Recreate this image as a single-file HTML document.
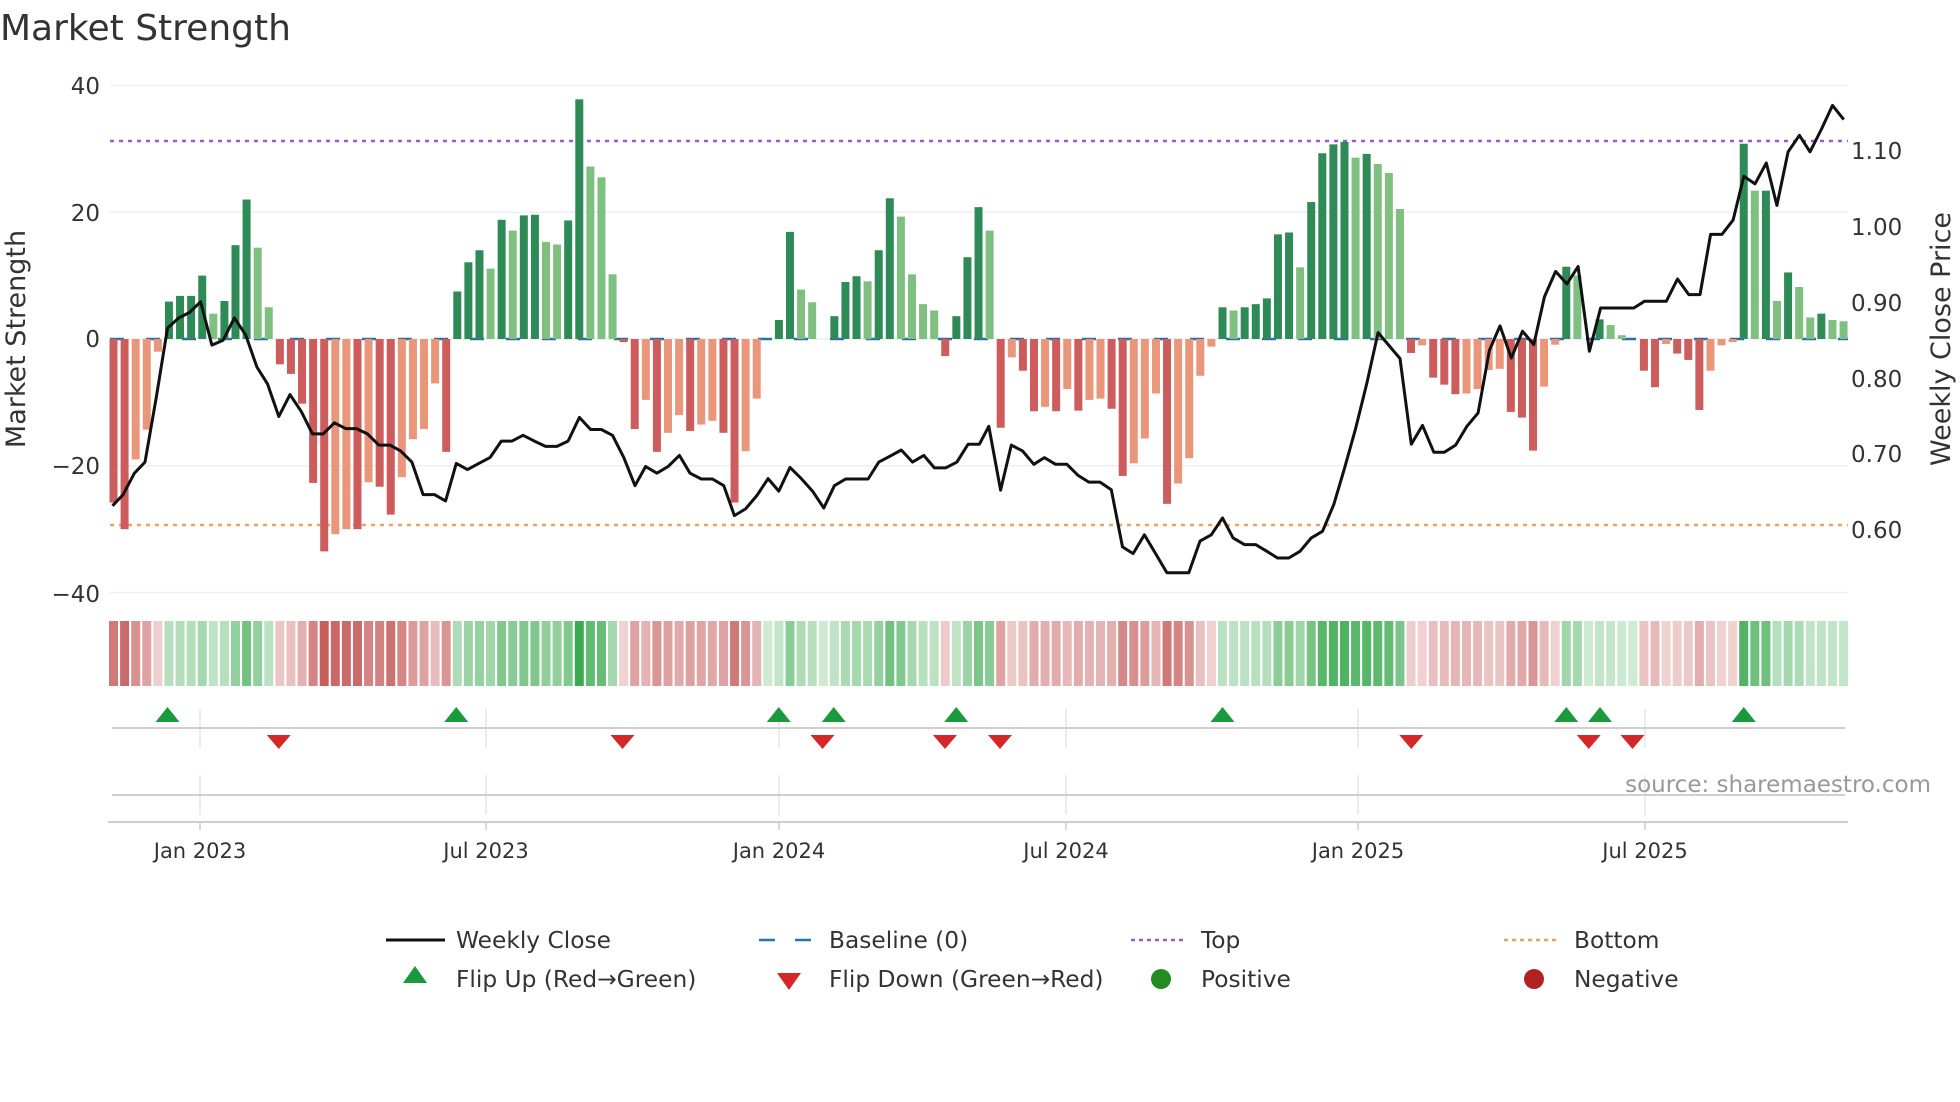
<!DOCTYPE html>
<html><head><meta charset="utf-8"><style>
html,body{margin:0;padding:0;background:#fff;}
svg{display:block;font-family:"DejaVu Sans","Liberation Sans",sans-serif;}
</style></head><body>
<svg id="c" width="1960" height="1102" viewBox="0 0 1960 1102" xmlns="http://www.w3.org/2000/svg">
<text x="0" y="40" font-size="36" fill="#333">Market Strength</text>
<g id="grid"></g>
<g id="bars"></g>
<g id="heat"></g>
<polyline id="pline" fill="none" stroke="#111" stroke-width="3" stroke-linejoin="round"/>
<g font-size="23" fill="#333">
<text x="100" y="94" text-anchor="end">40</text>
<text x="100" y="221" text-anchor="end">20</text>
<text x="100" y="347" text-anchor="end">0</text>
<text x="100" y="474" text-anchor="end">−20</text>
<text x="100" y="602" text-anchor="end">−40</text>
<text x="1851" y="159">1.10</text>
<text x="1851" y="235">1.00</text>
<text x="1851" y="311">0.90</text>
<text x="1851" y="387">0.80</text>
<text x="1851" y="462">0.70</text>
<text x="1851" y="538">0.60</text>
<text transform="translate(25,339) rotate(-90)" text-anchor="middle" font-size="27">Market Strength</text>
<text transform="translate(1950,339) rotate(-90)" text-anchor="middle" font-size="27">Weekly Close Price</text>
</g>
<g id="marks"></g>
<text x="1931" y="792" font-size="23" fill="#999" text-anchor="end">source: sharemaestro.com</text>
<g font-size="21" fill="#333" text-anchor="middle">
<text x="200" y="858">Jan 2023</text>
<text x="486" y="858">Jul 2023</text>
<text x="779" y="858">Jan 2024</text>
<text x="1066" y="858">Jul 2024</text>
<text x="1358" y="858">Jan 2025</text>
<text x="1645" y="858">Jul 2025</text>
</g>
<g font-size="23.3" fill="#333">
<line x1="386" y1="940" x2="445" y2="940" stroke="#111" stroke-width="3"/>
<text x="456" y="948">Weekly Close</text>
<line x1="759" y1="940" x2="812" y2="940" stroke="#1f77b4" stroke-width="2.5" stroke-dasharray="16,20"/>
<text x="829" y="948">Baseline (0)</text>
<line x1="1131" y1="940" x2="1185" y2="940" stroke="#9b59d0" stroke-width="2.5" stroke-dasharray="4,4"/>
<text x="1201" y="948">Top</text>
<line x1="1504" y1="940" x2="1557" y2="940" stroke="#f0a060" stroke-width="2.5" stroke-dasharray="4,4"/>
<text x="1574" y="948">Bottom</text>
<polygon points="415,966 427,983 403,983" fill="#1a9a3c"/>
<text x="456" y="987">Flip Up (Red→Green)</text>
<polygon points="777,973 801,973 789,990" fill="#d62728"/>
<text x="829" y="987">Flip Down (Green→Red)</text>
<circle cx="1161" cy="979" r="10" fill="#228b22"/>
<text x="1201" y="987">Positive</text>
<circle cx="1534" cy="979" r="10" fill="#b22222"/>
<text x="1574" y="987">Negative</text>
</g>
</svg>
<script>
(function(){
var NS="http://www.w3.org/2000/svg";
function el(p,t,a){var e=document.createElementNS(NS,t);for(var k in a)e.setAttribute(k,a[k]);p.appendChild(e);return e;}
var v=[-25.8,-30,-19,-14.3,-2,5.9,6.8,6.8,10,4,6,14.8,22,14.4,5,-4,-5.5,-10.2,-22.7,-33.5,-30.8,-30,-30,-22.6,-23.3,-27.7,-21.8,-15.8,-14.2,-7,-17.8,7.5,12.1,14,11.1,18.8,17.1,19.5,19.6,15.3,14.9,18.7,37.8,27.2,25.5,10.2,-0.5,-14.2,-9.6,-17.8,-14.8,-12,-14.5,-13.5,-12.9,-14.8,-25.8,-17.7,-9.4,0,3,16.9,7.8,5.8,0,3.6,9,9.9,9.1,14,22.2,19.3,10.2,5.5,4.5,-2.7,3.6,12.9,20.8,17.1,-14,-2.9,-5,-11.4,-10.7,-11.4,-7.9,-11.3,-9.6,-9.4,-11,-21.6,-19.6,-15.7,-8.6,-26,-22.8,-18.8,-5.8,-1.2,5,4.5,5,5.5,6.4,16.5,16.8,11.3,21.6,29.3,30.7,31.1,28.6,29.2,27.6,26.2,20.5,-2.2,-1,-6.1,-7.2,-8.7,-8.6,-7.9,-4.9,-4.7,-11.5,-12.4,-17.6,-7.5,-0.9,11.4,10,0,3.1,2.2,0.6,0,-5,-7.6,-0.8,-2.3,-3.3,-11.2,-5,-1,-0.5,30.8,23.4,23.4,6,10.5,8.2,3.4,4,3,2.8];
var g=document.getElementById('grid'),b=document.getElementById('bars'),hg=document.getElementById('heat'),m=document.getElementById('marks');
var y0=339,u=6.34,x0=113.5,st=11.09;
[40,20,0,-20,-40].forEach(function(t){el(g,'line',{x1:110,x2:1848,y1:y0-t*u,y2:y0-t*u,stroke:'#eceff4','stroke-width':1.5});});
el(g,'line',{x1:110,x2:1848,y1:141,y2:141,stroke:'#9b59d0','stroke-width':2.5,'stroke-dasharray':'4,5'});
el(g,'line',{x1:110,x2:1848,y1:525,y2:525,stroke:'#f0a060','stroke-width':2.5,'stroke-dasharray':'4,5'});
el(g,'line',{x1:110,x2:1848,y1:y0,y2:y0,stroke:'#2a6fa6','stroke-width':2.5,'stroke-dasharray':'14,22'});
for(var i=0;i<v.length;i++){var x=x0+i*st,val=v[i],p=i?v[i-1]:0;
 if(val!==0){var pos=val>0,dark=(p*val<=0)||Math.abs(val)>=Math.abs(p);
  var col=pos?(dark?'#2e8b57':'#7fbf7f'):(dark?'#cd5c5c':'#e9967a');
  var ty=pos?y0-val*u:y0,hh=Math.abs(val)*u;
  el(b,'rect',{x:x-4,y:ty,width:8,height:hh,fill:col});}
 var a=0.25+0.75*Math.min(Math.abs(val)/36,1);
 var hc=val>=0?'rgba(60,170,80,'+a+')':'rgba(195,85,85,'+a+')';
 el(hg,'rect',{x:x-4.5,y:621,width:9,height:65,fill:hc});
}
var L=[[180,1133],[197,1108],[215,1060],[232,1035],[250,890],[268,735],[286,712],[303,700],[321,676],[339,773],[357,762],[375,712],[393,750],[411,822],[428,860],[446,933],[464,884],[482,922],[500,972],[517,972],[535,947],[553,960],[570,960],[588,972],[606,997],[624,997],[641,1010],[659,1035],[677,1108],[695,1108],[713,1122],[730,1038],[748,1052],[766,1038],[784,1025],[802,988],[819,988],[837,975],[855,988],[873,1000],[891,1000],[909,988],[927,935],[945,962],[962,962],[980,975],[998,1025],[1016,1088],[1033,1045],[1051,1060],[1069,1045],[1087,1020],[1104,1060],[1122,1073],[1140,1073],[1158,1088],[1175,1155],[1193,1140],[1211,1110],[1229,1072],[1246,1100],[1264,1047],[1282,1072],[1300,1100],[1318,1138],[1335,1088],[1353,1073],[1371,1073],[1389,1073],[1406,1035],[1424,1022],[1442,1008],[1460,1035],[1478,1020],[1495,1048],[1513,1048],[1531,1035],[1549,995],[1567,995]];
var L2=[[14,955],[33,1098],[50,997],[68,1010],[86,1040],[103,1025],[121,1040],[139,1040],[157,1065],[174,1080],[192,1080],[210,1097],[228,1225],[245,1240],[263,1198],[281,1240],[299,1283],[316,1283],[334,1283],[352,1212],[370,1198],[388,1160],[405,1205],[423,1220],[441,1220],[459,1235],[476,1250],[494,1250],[512,1235],[530,1205],[548,1190],[566,1130],[583,1050],[601,960],[619,858],[637,745],[655,775],[672,803],[690,995],[708,953],[726,1013],[743,1013],[761,997],[779,955],[797,925],[815,785],[832,730],[850,802],[868,742],[886,772],[903,665],[921,608],[939,636],[957,597],[975,787],[993,690],[1010,690],[1028,690],[1046,690],[1063,675],[1081,675],[1098,675],[1116,625],[1134,660],[1152,660],[1169,525],[1187,525],[1205,493],[1222,395],[1240,412],[1258,365],[1275,460],[1293,340],[1311,303],[1328,340],[1346,290],[1364,236],[1382,268]];
var pts=L.map(function(q){return (q[0]/1.6).toFixed(1)+','+(q[1]/2.24).toFixed(1);}).concat(L2.map(function(q){return ((q[0]+1568)/1.6).toFixed(1)+','+(q[1]/2.24).toFixed(1);}));
document.getElementById('pline').setAttribute('points',pts.join(' '));
[200,486,779,1066,1358,1645].forEach(function(x){
 el(m,'line',{x1:x,x2:x,y1:709,y2:748,stroke:'#e6e6e6','stroke-width':1.5});
 el(m,'line',{x1:x,x2:x,y1:775,y2:815,stroke:'#e6e6e6','stroke-width':1.5});
 el(m,'line',{x1:x,x2:x,y1:822,y2:830,stroke:'#ccc','stroke-width':1.5});});
el(m,'line',{x1:112,x2:1845,y1:728,y2:728,stroke:'#cfcfcf','stroke-width':2});
el(m,'line',{x1:112,x2:1845,y1:795,y2:795,stroke:'#cfcfcf','stroke-width':2});
el(m,'line',{x1:108,x2:1848,y1:822,y2:822,stroke:'#cfcfcf','stroke-width':2});
[134,365,623,667,765,978,1253,1280,1395].forEach(function(d){var x=d*1.25;el(m,'polygon',{points:(x)+',707 '+(x+12)+',722 '+(x-12)+',722',fill:'#1a9a3c'});});
[223,498,658,756,800,1129,1271,1306].forEach(function(d){var x=d*1.25;el(m,'polygon',{points:(x-12)+',735 '+(x+12)+',735 '+x+',749',fill:'#d62728'});});
})();
</script>
</body></html>
